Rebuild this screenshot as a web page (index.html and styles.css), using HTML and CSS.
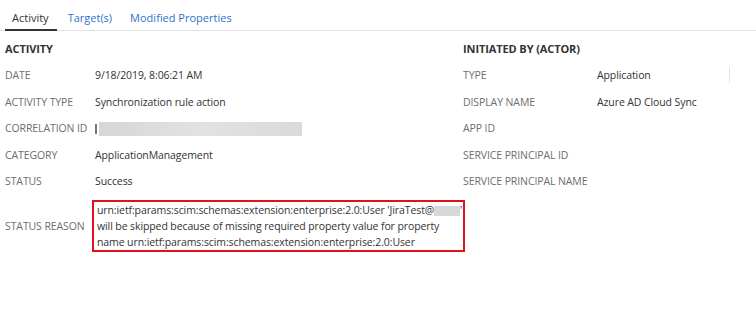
FILE: index.html
```html
<!DOCTYPE html>
<html lang="en">
  <head>
    <meta charset="UTF-8" />
    <title>Audit log details</title>
    <link rel="stylesheet" href="styles.css">
  </head>
  <body>
    <div class="tabs">
      <span class="tab active">Activity</span>
      <span class="tab">Target(s)</span>
      <span class="tab">Modified Properties</span>
    </div>
    <div class="details">
      <div class="section">
        <div class="heading">ACTIVITY</div>
        <div class="row"><span class="label">DATE</span><span class="value">9/18/2019, 8:06:21 AM</span></div>
        <div class="row"><span class="label">ACTIVITY TYPE</span><span class="value">Synchronization rule action</span></div>
        <div class="row"><span class="label">CORRELATION ID</span><span class="value"><span class="blur-start"></span><span class="blur-bar"></span></span></div>
        <div class="row"><span class="label">CATEGORY</span><span class="value">ApplicationManagement</span></div>
        <div class="row"><span class="label">STATUS</span><span class="value">Success</span></div>
      </div>
      <div class="section actor">
        <div class="heading">INITIATED BY (ACTOR)</div>
        <div class="row"><span class="label">TYPE</span><span class="value">Application</span><span class="cursor"></span></div>
        <div class="row"><span class="label">DISPLAY NAME</span><span class="value">Azure AD Cloud Sync</span></div>
        <div class="row"><span class="label">APP ID</span><span class="value"></span></div>
        <div class="row"><span class="label">SERVICE PRINCIPAL ID</span><span class="value"></span></div>
        <div class="row"><span class="label">SERVICE PRINCIPAL NAME</span><span class="value"></span></div>
      </div>
    </div>
    <div class="reason">
      <span class="label">STATUS REASON</span>
      <div class="reason-box">
        urn:ietf:params:scim:schemas:extension:enterprise:2.0:User 'JiraTest@<span class="blur-mail"></span>'<br>
        will be skipped because of missing required property value for property<br>
        name urn:ietf:params:scim:schemas:extension:enterprise:2.0:User
      </div>
    </div>
  </body>
</html>
```

FILE: styles.css
```css
body {
  margin: 0;
  background-color: white;
  color: #333;
  font-family: "Open Sans", sans-serif;
  font-size: 10.5px;
  letter-spacing: -0.1px;
}

.tabs {
  display: flex;
  padding-left: 5px;
  height: 30px;
  border-bottom: 1px solid #e2e2e2;
}

.tab {
  padding: 10px 0 0 0;
  margin-right: 18px;
  color: #2f73c9;
  font-size: 11px;
  letter-spacing: 0;
}

.tab.active {
  color: #333;
  padding: 10px 8px 0 7px;
  border-bottom: 2px solid #333;
  margin-bottom: -1px;
  margin-right: 11px;
}

.details {
  display: grid;
  grid-template-columns: 458px 1fr;
  padding: 7px 0 0 5px;
}

.heading {
  font-weight: 700;
  font-size: 11px;
  color: #333;
  height: 24px;
  line-height: 22px;
}

.row {
  display: flex;
  align-items: center;
  height: 26.5px;
  position: relative;
}

.label {
  width: 90px;
  color: #6e6e6e;
  flex-shrink: 0;
  white-space: nowrap;
}

.actor .label {
  width: 134px;
}

.blur-start {
  display: inline-block;
  width: 2px;
  height: 10px;
  background-color: #777;
  vertical-align: middle;
}

.blur-bar {
  display: inline-block;
  width: 203px;
  height: 14px;
  margin-left: 2px;
  background: linear-gradient(90deg, #d6d6d6, #e2e2e2 50%, #dadada);
  vertical-align: middle;
}

.cursor {
  position: absolute;
  left: 266px;
  top: 5px;
  width: 1px;
  height: 16px;
  background-color: #e4e4e4;
}

.reason {
  display: flex;
  align-items: center;
  padding: 5px 0 0 5px;
}

.reason .label {
  width: 87px;
}

.reason-box {
  width: 363px;
  border: 2px solid #e0101c;
  padding: 0 3px 0 3px;
  line-height: 16px;
  color: #333;
  white-space: nowrap;
}

.blur-mail {
  display: inline-block;
  width: 26px;
  height: 10px;
  background-color: #d8d8d8;
  vertical-align: middle;
}
```
